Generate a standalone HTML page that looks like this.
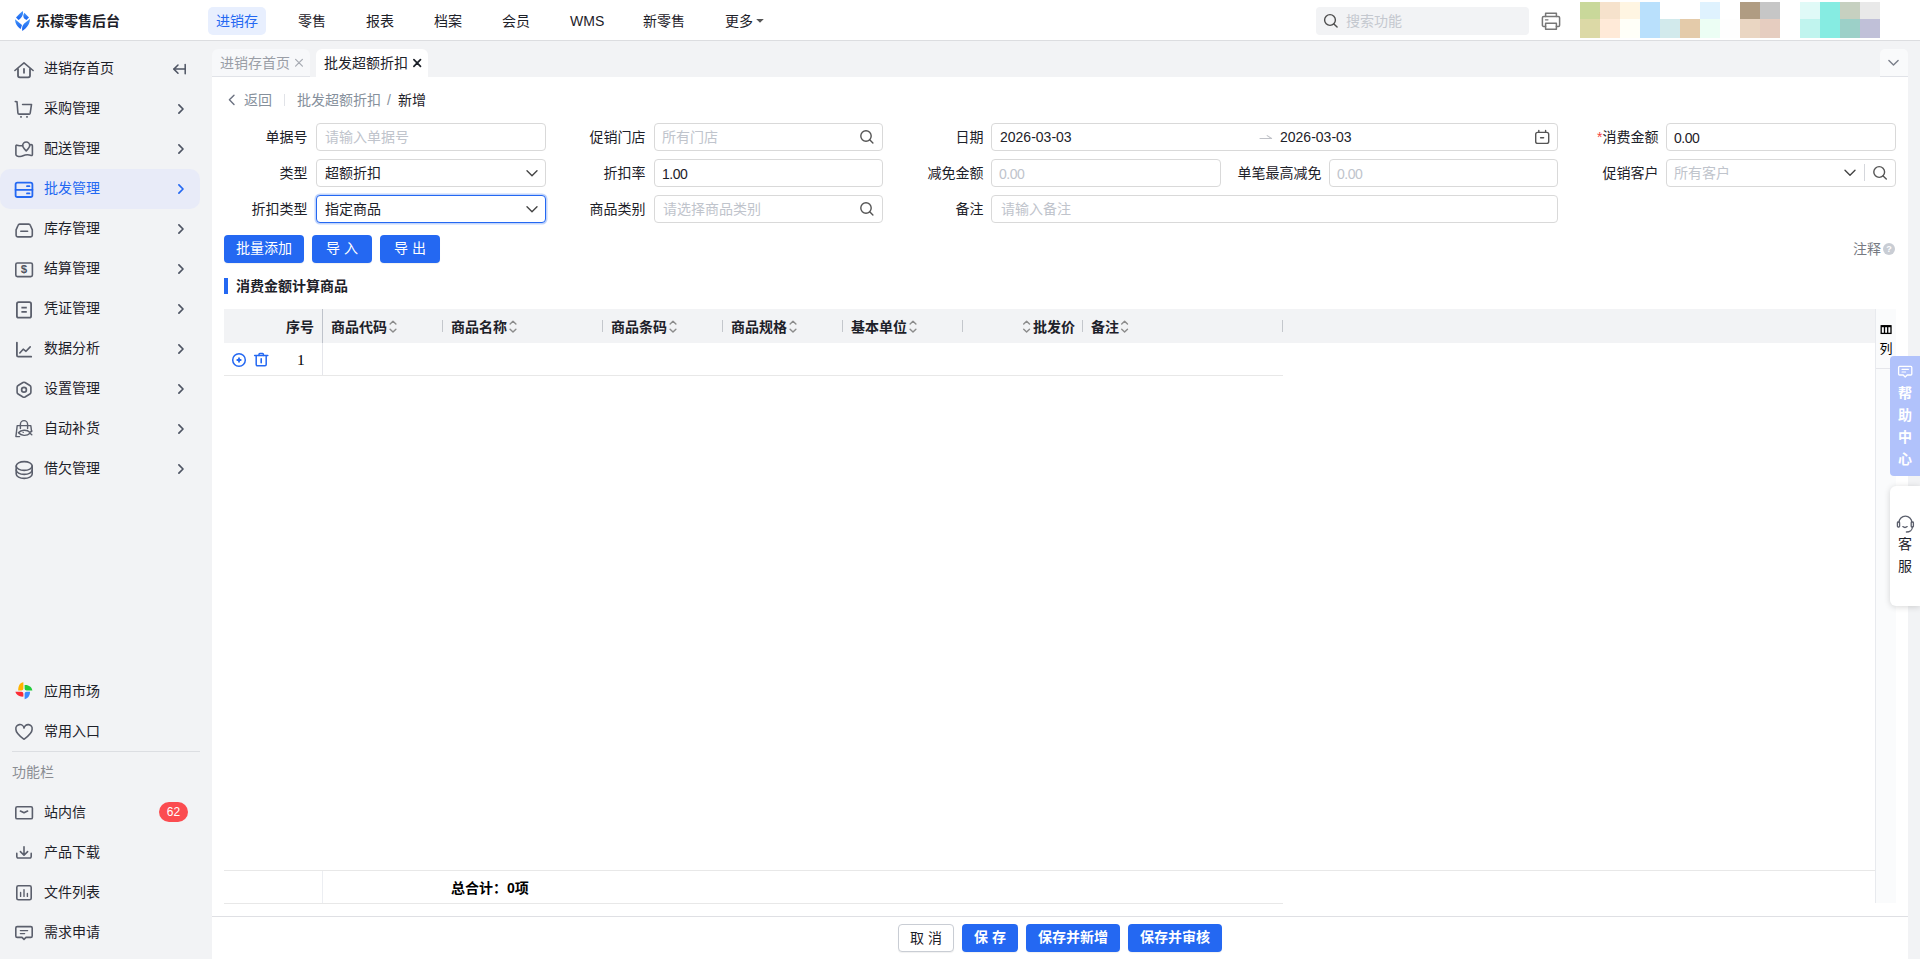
<!DOCTYPE html>
<html lang="zh-CN">
<head>
<meta charset="utf-8">
<title>批发超额折扣 - 新增</title>
<style>
*{box-sizing:border-box;margin:0;padding:0}
html,body{width:1920px;height:959px;overflow:hidden;background:#f2f3f5;
  font-family:"Liberation Sans","Noto Sans CJK SC",sans-serif;font-size:14px;color:#1d2129}
.abs{position:absolute}
#page{position:relative;width:1920px;height:959px;overflow:hidden;background:#f2f3f5}
/* header */
#hdr{position:absolute;left:0;top:0;width:1920px;height:41px;background:#fff;border-bottom:1px solid #dcdde0}
.t{position:absolute;white-space:nowrap;line-height:20px;height:20px;font-size:14px}
.nav{top:11px;color:#1d2129}
#pill{left:208px;top:7px;width:58px;height:28px;border-radius:5px;background:#e8effe}
/* sidebar */
.si{position:absolute;left:44px;font-size:14px;line-height:20px;height:20px;color:#1d2129;white-space:nowrap}
.chev{position:absolute;left:176px;width:10px;height:12px}
.ico{position:absolute;left:13px;width:22px;height:22px}
svg{display:block;overflow:visible}
/* main */
#main{position:absolute;left:212px;top:77px;width:1696px;height:882px;background:#fff}
.lbl{position:absolute;white-space:nowrap;line-height:20px;height:20px;font-size:14px;color:#1d2129;text-align:right}
.inp{position:absolute;height:28px;border:1px solid #d9d9d9;border-radius:4px;background:#fff;font-size:14px;line-height:26px;padding-left:8px;white-space:nowrap;color:#1d2129}
.ph{color:#c0c4cc}
.btn{position:absolute;height:28px;border-radius:4px;background:#2468f2;color:#fff;font-size:14px;line-height:27px;box-shadow:0 1px 1px rgba(0,0,0,.06);text-align:center;white-space:nowrap}
.th{position:absolute;top:317px;font-weight:bold;font-size:14px;line-height:20px;height:20px;white-space:nowrap;color:#1d2129}
.sep{position:absolute;top:320px;width:1px;height:12px;background:#c4c7cc}
</style>
</head>
<body>
<div id="page">

<!-- ===== MAIN WHITE AREA ===== -->
<div id="main"></div>


<!-- ===== TABS ===== -->
<div class="abs" style="left:212px;top:49px;width:98px;height:28px;background:#f7f8fa;border-radius:6px 6px 0 0;border-bottom:1px solid #e1e3e8"></div>
<div class="abs" style="left:316px;top:49px;width:112px;height:28px;background:#fff;border-radius:6px 6px 0 0"></div>
<div class="t" style="left:220px;top:53px;color:#9a9ea6">进销存首页</div>
<div class="t" style="left:324px;top:53px;color:#1d2129">批发超额折扣</div>
<div class="abs" style="left:1880px;top:49px;width:28px;height:28px;background:#f9fafb;border-radius:5px 5px 0 0;border-bottom:1px solid #e1e3e8"></div>

<!-- ===== BREADCRUMB ===== -->
<div class="t" style="left:244px;top:90px;color:#86909c">返回</div>
<div class="abs" style="left:284px;top:94px;width:1px;height:12px;background:#e1e3e8"></div>
<div class="t" style="left:297px;top:90px;color:#86909c">批发超额折扣</div>
<div class="t" style="left:387px;top:90px;color:#86909c">/</div>
<div class="t" style="left:398px;top:90px;color:#1d2129">新增</div>

<!-- ===== FORM ===== -->
<div class="lbl" style="left:224.5px;width:83px;top:127px">单据号</div>
<div class="inp ph" style="left:316px;top:123px;width:230px">请输入单据号</div>
<div class="lbl" style="left:224.5px;width:83px;top:163px">类型</div>
<div class="inp" style="left:316px;top:159px;width:230px">超额折扣</div>
<div class="lbl" style="left:224.5px;width:83px;top:199px">折扣类型</div>
<div class="inp" style="left:316px;top:195px;width:230px;border-color:#2468f2;box-shadow:0 0 0 1.5px rgba(36,104,242,.28)">指定商品</div>

<div class="lbl" style="left:562.5px;width:83px;top:127px">促销门店</div>
<div class="inp ph" style="left:654px;top:123px;width:229px;padding-left:7px">所有门店</div>
<div class="lbl" style="left:562.5px;width:83px;top:163px">折扣率</div>
<div class="inp" style="left:654px;top:159px;width:229px;padding-left:7px;line-height:28px;letter-spacing:-0.5px">1.00</div>
<div class="lbl" style="left:562.5px;width:83px;top:199px">商品类别</div>
<div class="inp ph" style="left:654px;top:195px;width:229px">请选择商品类别</div>

<div class="lbl" style="left:900.5px;width:83px;top:127px">日期</div>
<div class="inp" style="left:991px;top:123px;width:567px"><span>2026-03-03</span><span class="abs" style="left:288px;top:0">2026-03-03</span></div>
<div class="lbl" style="left:900.5px;width:83px;top:163px">减免金额</div>
<div class="inp ph" style="left:991px;top:159px;width:230px;padding-left:7px;line-height:28px;letter-spacing:-0.5px">0.00</div>
<div class="lbl" style="left:1221.5px;width:100px;top:163px">单笔最高减免</div>
<div class="inp ph" style="left:1329px;top:159px;width:229px;padding-left:7px;line-height:28px;letter-spacing:-0.5px">0.00</div>
<div class="lbl" style="left:900.5px;width:83px;top:199px">备注</div>
<div class="inp ph" style="left:991px;top:195px;width:567px;padding-left:9px">请输入备注</div>

<div class="lbl" style="left:1575.5px;width:83px;top:127px"><span style="color:#f53f3f">*</span>消费金额</div>
<div class="inp" style="left:1666px;top:123px;width:230px;padding-left:7px;line-height:28px;letter-spacing:-0.5px">0.00</div>
<div class="lbl" style="left:1575.5px;width:83px;top:163px">促销客户</div>
<div class="inp ph" style="left:1666px;top:159px;width:230px;padding-left:7px">所有客户</div>
<div class="abs" style="left:1864px;top:164px;width:1px;height:17px;background:#d5d7dc"></div>

<!-- ===== ACTION BUTTONS ===== -->
<div class="btn" style="left:224px;top:235px;width:80px">批量添加</div>
<div class="btn" style="left:312px;top:235px;width:60px">导 入</div>
<div class="btn" style="left:380px;top:235px;width:60px">导 出</div>
<div class="t" style="left:1853px;top:239px;color:#767a82">注释</div>
<div class="abs" style="left:1883px;top:243px;width:12px;height:12px;border-radius:6px;background:#c9cdd4;color:#fff;font-size:9px;line-height:12px;text-align:center;font-weight:bold">?</div>

<!-- ===== SECTION TITLE ===== -->
<div class="abs" style="left:224px;top:278px;width:4px;height:16px;background:#2468f2"></div>
<div class="t" style="left:236px;top:276px;font-weight:bold">消费金额计算商品</div>

<!-- ===== TABLE ===== -->
<div class="abs" style="left:224px;top:309px;width:1651px;height:34px;background:#f2f3f5"></div>
<div class="abs" style="left:322px;top:309px;width:1px;height:34px;background:#bfc3cb"></div><div class="abs" style="left:322px;top:343px;width:1px;height:33px;background:#e5e6eb"></div>
<div class="abs" style="left:224px;top:375px;width:1059px;height:1px;background:#e8e8e8"></div>
<div class="th" style="left:286px">序号</div>
<div class="th" style="left:331px">商品代码</div>
<div class="th" style="left:451px">商品名称</div>
<div class="th" style="left:611px">商品条码</div>
<div class="th" style="left:731px">商品规格</div>
<div class="th" style="left:851px">基本单位</div>
<div class="th" style="left:1033px">批发价</div>
<div class="th" style="left:1091px">备注</div>
<div class="sep" style="left:442px"></div>
<div class="sep" style="left:602px"></div>
<div class="sep" style="left:722px"></div>
<div class="sep" style="left:842px"></div>
<div class="sep" style="left:962px"></div>
<div class="sep" style="left:1082px"></div>
<div class="sep" style="left:1282px"></div>
<div class="t" style="left:297px;top:350px;font-family:'Liberation Serif',serif;font-size:15.5px;color:#000">1</div>

<!-- column settings strip -->
<div class="abs" style="left:1875px;top:309px;width:21px;height:594px;background:#fafbfc;border-left:1px solid #e8eaee"></div>
<div class="abs" style="left:1876px;top:368px;width:20px;height:1px;background:#e5e6eb"></div>
<div class="t" style="left:1879.5px;top:339px;font-size:13px;color:#000">列</div>

<!-- ===== TOTAL ROW ===== -->
<div class="abs" style="left:224px;top:870px;width:1651px;height:1px;background:#e8e8e8"></div>
<div class="abs" style="left:224px;top:903px;width:1059px;height:1px;background:#e8e8e8"></div>
<div class="abs" style="left:322px;top:871px;width:1px;height:32px;background:#eceef2"></div>
<div class="t" style="left:451px;top:878px;font-weight:bold;font-size:14px;color:#000">总合计：0项</div>

<!-- ===== BOTTOM BAR ===== -->
<div class="abs" style="left:212px;top:916px;width:1696px;height:1px;background:#dfe0e4"></div>
<div class="btn" style="left:898px;top:924px;width:56px;height:28px;line-height:26px;background:#fff;color:#1d2129;border:1px solid #c9cdd4">取 消</div>
<div class="btn" style="left:962px;top:924px;width:56px;height:28px;line-height:27px;font-weight:bold">保 存</div>
<div class="btn" style="left:1026px;top:924px;width:94px;height:28px;line-height:27px;font-weight:bold">保存并新增</div>
<div class="btn" style="left:1128px;top:924px;width:94px;height:28px;line-height:27px;font-weight:bold">保存并审核</div>

<!-- ===== RIGHT FLOATS ===== -->
<div class="abs" style="left:1890px;top:356px;width:30px;height:120px;background:#b1c2fb;border-radius:4px 0 0 4px"></div>
<div class="abs" style="left:1890px;top:486px;width:30px;height:120px;background:#fff;border-radius:6px 0 0 6px;box-shadow:0 1px 6px rgba(0,0,0,.16)"></div>
<div class="t" style="left:1898px;top:382px;color:#fff;font-size:14px;line-height:22px;height:auto;width:14px;white-space:normal;font-weight:bold">帮助中心</div>
<div class="t" style="left:1898px;top:533px;color:#1d2129;font-size:14px;line-height:22px;height:auto;width:14px;white-space:normal">客服</div>

<!-- ===== HEADER ===== -->
<div id="hdr"></div>
<div class="abs" id="pill"></div>
<div class="t" style="left:36px;top:11px;font-weight:bold;font-size:14px;color:#1d2129;letter-spacing:0">乐檬零售后台</div>
<div class="t nav" style="left:216px;color:#2468f2">进销存</div>
<div class="t nav" style="left:298px">零售</div>
<div class="t nav" style="left:366px">报表</div>
<div class="t nav" style="left:434px">档案</div>
<div class="t nav" style="left:502px">会员</div>
<div class="t nav" style="left:570px">WMS</div>
<div class="t nav" style="left:643px">新零售</div>
<div class="t nav" style="left:725px">更多</div>

<!-- ===== MAIN ICONS (page coordinates) ===== -->
<svg class="abs" style="left:0;top:0" width="1920" height="959" viewBox="0 0 1920 959" fill="none" stroke-linecap="round" stroke-linejoin="round">
  <defs><linearGradient id="lg" x1="0" y1="0" x2="0" y2="1"><stop offset="0" stop-color="#4697fa"/><stop offset="1" stop-color="#1660ef"/></linearGradient></defs>
  <!-- logo -->
  <g fill="url(#lg)" stroke="none">
    <path d="M22.8 10.9 C21.2 12.2 17.4 15.6 16 17.6 L18.5 20 C20.4 18.6 24 15.6 22.8 10.9 z"/>
    <path d="M24.3 12.8 L29 17.4 L26.4 20 C23.4 18.6 22.4 16 24.3 12.8 z"/>
    <path d="M15.1 19.2 L22 25 L20.7 29.1 C17.6 27 15 23.6 15.1 19.2 z"/>
    <path d="M29.9 19 C30.1 23.6 27 27.8 22.3 30.9 C21.6 27.6 22.4 25 24.2 23.4 C26 21.8 28 20.6 29.9 19 z"/>
  </g>
  <!-- header: caret, search, printer, pixel blocks -->
  <path d="M756.2 19 H763.8 L760 22.8 z" fill="#555" stroke="none"/>
  <rect x="1316" y="7" width="213" height="28" rx="4" fill="#f2f3f5"/>
  <g stroke="#4e4e4e" stroke-width="1.4"><circle cx="1330" cy="20" r="5.4"/><path d="M1333.9 23.9 L1337.1 27.1"/></g>
  <g stroke="#777" stroke-width="1.5">
    <path d="M1545.6 16.4 V13.2 H1556.4 V16.4"/>
    <path d="M1545.6 26.4 H1543.6 a1.2 1.2 0 0 1 -1.2 -1.2 V17.8 a1.4 1.4 0 0 1 1.4 -1.4 H1558.2 a1.4 1.4 0 0 1 1.4 1.4 V25.2 a1.2 1.2 0 0 1 -1.2 1.2 H1556.4"/>
    <rect x="1545.6" y="23.2" width="10.8" height="6" />
    <path d="M1545.4 19.8 H1548" stroke-width="1.2"/>
  </g>
  <g stroke="none"><rect x="1580" y="2" width="20" height="17" fill="#c9d89a"/><rect x="1580" y="19" width="20" height="19" fill="#dcd9a6"/><rect x="1600" y="2" width="20" height="17" fill="#f6e2cc"/><rect x="1600" y="19" width="20" height="19" fill="#ffead8"/><rect x="1620" y="2" width="20" height="17" fill="#fff5e2"/><rect x="1620" y="19" width="20" height="19" fill="#fffff8"/><rect x="1640" y="2" width="20" height="17" fill="#b9e0fc"/><rect x="1640" y="19" width="20" height="19" fill="#b9e0fc"/><rect x="1660" y="19" width="20" height="19" fill="#d2eaec"/><rect x="1680" y="19" width="20" height="19" fill="#e4cbaa"/><rect x="1700" y="2" width="20" height="17" fill="#dff2fe"/><rect x="1700" y="19" width="20" height="19" fill="#ecfef4"/><rect x="1720" y="19" width="20" height="19" fill="#fefefe"/><rect x="1740" y="2" width="20" height="17" fill="#b09c82"/><rect x="1740" y="19" width="20" height="19" fill="#ead6c2"/><rect x="1760" y="2" width="20" height="17" fill="#c6c6c6"/><rect x="1760" y="19" width="20" height="19" fill="#e6cdc0"/><rect x="1800" y="2" width="20" height="17" fill="#e0faf7"/><rect x="1800" y="19" width="20" height="19" fill="#c0f4ee"/><rect x="1820" y="2" width="20" height="17" fill="#86ece2"/><rect x="1820" y="19" width="20" height="19" fill="#86ece2"/><rect x="1840" y="2" width="20" height="17" fill="#c6d0c0"/><rect x="1840" y="19" width="20" height="19" fill="#9cd0c8"/><rect x="1860" y="2" width="20" height="17" fill="#e9e9e9"/><rect x="1860" y="19" width="20" height="19" fill="#c0c0d8"/></g>
  <!-- tab close, collapse chevron -->
  <path d="M295.6 59.4 L302.4 66.2 M302.4 59.4 L295.6 66.2" stroke="#a6aab2" stroke-width="1.2"/>
  <path d="M413.9 59.7 L420.5 66.3 M420.5 59.7 L413.9 66.3" stroke="#1d2129" stroke-width="1.7"/>
  <path d="M1888.9 60.5 L1893.5 65.1 L1898.1 60.5" stroke="#7a7f8a" stroke-width="1.4"/>
  <!-- back -->
  <path d="M234 95.2 L229.4 99.8 L234 104.4" stroke="#6b7180" stroke-width="1.4"/>
  <!-- form icons -->
  <path d="M527 170.7 L532 175.7 L537 170.7" stroke="#444" stroke-width="1.4"/>
  <path d="M527 206.7 L532 211.7 L537 206.7" stroke="#444" stroke-width="1.4"/>
  <g stroke="#555" stroke-width="1.4"><circle cx="866" cy="136" r="5.2"/><path d="M869.7 139.7 L872.9 142.9"/></g>
  <g stroke="#555" stroke-width="1.4"><circle cx="866" cy="208" r="5.2"/><path d="M869.7 211.7 L872.9 214.9"/></g>
  <path d="M1260 138.5 H1271.6 L1267.2 135.6" stroke="#c0c2c8" stroke-width="1.1"/>
  <g stroke="#555" stroke-width="1.4">
    <rect x="1535.7" y="132.4" width="13" height="11" rx="2"/>
    <path d="M1538.8 130.4 V132.4 M1545.6 130.4 V132.4"/>
    <path d="M1540.6 137.7 H1543.6"/>
  </g>
  <path d="M1845 170.3 L1850 175.3 L1855 170.3" stroke="#444" stroke-width="1.4"/>
  <g stroke="#555" stroke-width="1.4"><circle cx="1879.2" cy="172" r="5.4"/><path d="M1883.1 175.9 L1886.3 179.1"/></g>
  <!-- table sort icons -->
  <g stroke="#8c8c8c" stroke-width="1.4">
    <path d="M390.1 324.1 L393.0 321.2 L395.9 324.1 M390.1 329.2 L393.0 332.1 L395.9 329.2"/><path d="M510.1 324.1 L513.0 321.2 L515.9 324.1 M510.1 329.2 L513.0 332.1 L515.9 329.2"/><path d="M670.1 324.1 L673.0 321.2 L675.9 324.1 M670.1 329.2 L673.0 332.1 L675.9 329.2"/><path d="M790.1 324.1 L793.0 321.2 L795.9 324.1 M790.1 329.2 L793.0 332.1 L795.9 329.2"/><path d="M910.1 324.1 L913.0 321.2 L915.9 324.1 M910.1 329.2 L913.0 332.1 L915.9 329.2"/><path d="M1023.7 324.1 L1026.6 321.2 L1029.5 324.1 M1023.7 329.2 L1026.6 332.1 L1029.5 329.2"/><path d="M1121.7 324.1 L1124.6 321.2 L1127.5 324.1 M1121.7 329.2 L1124.6 332.1 L1127.5 329.2"/>
  </g>
  <!-- row icons -->
  <g stroke="#2468f2" stroke-width="1.5">
    <circle cx="239" cy="360" r="6.3"/>
    <path d="M236.6 360 H241.4 M239 357.6 V362.4" stroke-width="1.8" stroke-linecap="butt"/>
    <path d="M254.6 355.6 H267.8"/>
    <path d="M259 355.4 V354.4 a0.8 0.8 0 0 1 0.8 -0.8 H262.6 a0.8 0.8 0 0 1 0.8 0.8 V355.4"/>
    <path d="M256.2 355.8 V364.6 a1.2 1.2 0 0 0 1.2 1.2 H265 a1.2 1.2 0 0 0 1.2 -1.2 V355.8"/>
    <path d="M261.2 358.8 V362.8" stroke-width="1.6"/>
  </g>
  <!-- column icon -->
  <g stroke="#000" stroke-width="1.3" stroke-linejoin="miter" stroke-linecap="butt">
    <rect x="1881.2" y="325.8" width="9.8" height="7.6"/>
    <path d="M1884.5 325.8 V333.4 M1887.7 325.8 V333.4"/>
    <path d="M1881.2 326.3 H1891" stroke-width="1.8"/>
  </g>
  <!-- help center bubble -->
  <g stroke="#fff" stroke-width="1.3">
    <path d="M1899.6 366.4 H1910.8 a1 1 0 0 1 1 1 V374 a1 1 0 0 1 -1 1 H1907.2 L1905.2 377 L1903.2 375 H1899.6 a1 1 0 0 1 -1 -1 V367.4 a1 1 0 0 1 1 -1 z"/>
    <path d="M1902 369.4 H1908.4 M1902 372 H1905.6" stroke-width="1.1"/>
  </g>
  <!-- headset -->
  <g stroke="#5b5f6c" stroke-width="1.3">
    <path d="M1899 522.6 a6.4 6.4 0 0 1 12.8 0"/>
    <rect x="1897.4" y="522" width="2.2" height="5" rx="0.8"/>
    <rect x="1911.2" y="522" width="2.2" height="5" rx="0.8"/>
    <path d="M1912.4 527 c0 3 -2.6 5 -6 5"/>
    <path d="M1902.8 526.6 c1.2 1 3.2 1 4.4 0"/>
  </g>
</svg>
<div class="t" style="left:1346px;top:11px;color:#c4c8cf">搜索功能</div>

<!-- ===== SIDEBAR ===== -->
<div class="abs" style="left:0;top:169px;width:200px;height:40px;border-radius:10px;background:#e8ebf8"></div>
<div class="si" style="top:58px">进销存首页</div>
<div class="si" style="top:98px">采购管理</div>
<div class="si" style="top:138px">配送管理</div>
<div class="si" style="top:178px;color:#2468f2">批发管理</div>
<div class="si" style="top:218px">库存管理</div>
<div class="si" style="top:258px">结算管理</div>
<div class="si" style="top:298px">凭证管理</div>
<div class="si" style="top:338px">数据分析</div>
<div class="si" style="top:378px">设置管理</div>
<div class="si" style="top:418px">自动补货</div>
<div class="si" style="top:458px">借欠管理</div>
<div class="si" style="top:681px">应用市场</div>
<div class="si" style="top:721px">常用入口</div>
<div class="abs" style="left:12px;top:751px;width:188px;height:1px;background:#dcdee2"></div>
<div class="si" style="left:12px;top:762px;color:#8a8d93">功能栏</div>
<div class="si" style="top:802px">站内信</div>
<div class="si" style="top:842px">产品下载</div>
<div class="si" style="top:882px">文件列表</div>
<div class="si" style="top:922px">需求申请</div>
<div class="abs" style="left:159px;top:802px;width:29px;height:20px;border-radius:10px;background:#fb4c50;color:#fff;font-size:12px;line-height:21px;text-align:center">62</div>

<!-- ===== SIDEBAR ICONS (page coordinates) ===== -->
<svg class="abs" style="left:0;top:0" width="212" height="959" viewBox="0 0 212 959" fill="none" stroke="#5b5f6c" stroke-width="1.6" stroke-linecap="round" stroke-linejoin="round">
  <!-- home -->
  <path d="M14.9 70.5 L24 62.8 L33.1 70.5"/>
  <path d="M18 69 V75.6 a1.7 1.7 0 0 0 1.7 1.7 H28.3 a1.7 1.7 0 0 0 1.7 -1.7 V69" stroke-width="1.8"/>
  <path d="M24 69 V72.8" stroke-width="1.8"/>
  <!-- collapse arrow -->
  <g stroke="#4e5463" stroke-width="1.5">
    <path d="M185.2 64.4 V73.8"/>
    <path d="M174 69.1 H185"/>
    <path d="M178 65 L173.9 69.1 L178 73.2"/>
  </g>
  <!-- cart -->
  <path d="M15.3 101.5 L17 101.9 L17.9 113 Q18 114.1 19.1 114.1 H29.2 Q30 114.1 30.2 113.2 L31.5 104.5 H22.6"/>
  <path d="M20.2 116.9 H21.8 M26.2 116.9 H27.8" stroke-width="1.7" stroke-linecap="butt"/>
  <!-- map pin -->
  <path d="M22.6 145.4 C21 146.4 19 145.6 17 145.2 Q15.9 145 15.9 146.2 V154.6 Q15.9 155.6 17 155.9 C19 156.6 21 156.8 23 155.8 C26 154.4 28.6 154.6 31.2 155.5 Q32.4 155.8 32.4 154.6 V145.8 Q32.4 144.6 31.2 144.6 L29.8 144.8"/>
  <path d="M26.2 142 a3.5 3.5 0 0 1 3.5 3.5 c0 1.9 -1.5 3.4 -3.5 5.4 c-2 -2 -3.5 -3.5 -3.5 -5.4 a3.5 3.5 0 0 1 3.5 -3.5 z"/>
  <!-- server (active) -->
  <g stroke="#2468f2" stroke-width="1.8">
    <rect x="15.6" y="182.6" width="16.8" height="14.4" rx="1.8"/>
    <path d="M15.6 189.8 H32.4"/>
    <path d="M27 186.2 H29.4 M27 193.4 H29.4"/>
  </g>
  <!-- inventory -->
  <path d="M19.7 224.1 H28.7 Q29.9 224.1 30.3 225.2 L32.3 229.9 V235.3 Q32.3 236.9 30.7 236.9 H17.7 Q16.1 236.9 16.1 235.3 V229.9 L18.1 225.2 Q18.5 224.1 19.7 224.1 z"/>
  <path d="M20.8 231.3 H27.6"/>
  <!-- settlement -->
  <rect x="15.8" y="263" width="16.6" height="13.6" rx="1.6"/>
  <!-- voucher -->
  <rect x="16.9" y="302.1" width="14.2" height="15.6" rx="1.8" stroke-width="1.8"/>
  <path d="M21.4 307.7 H26.8 M21.4 311.9 H26.8" stroke-linecap="butt" stroke-width="1.7"/>
  <!-- chart -->
  <path d="M16.9 342.6 V355.3 a1.4 1.4 0 0 0 1.4 1.4 H31.2" stroke-width="1.8"/>
  <path d="M19.8 353 L23.2 349.2 L26 351.3 L30.2 346.9"/>
  <!-- settings -->
  <path d="M23 382.5 a2 2 0 0 1 2 0 L29.9 385.5 a2 2 0 0 1 1 1.7 V392.3 a2 2 0 0 1 -1 1.7 L25 397 a2 2 0 0 1 -2 0 L18.1 394 a2 2 0 0 1 -1 -1.7 V387.2 a2 2 0 0 1 1 -1.7 z"/>
  <circle cx="24" cy="389.8" r="2.4" stroke-width="1.7"/>
  <!-- auto replenish: bag + eye -->
  <g stroke-width="1.4">
    <path d="M20.4 425.6 V424.2 a3.6 3.6 0 0 1 7.2 0 V428.6"/>
    <path d="M20.4 425.6 V428.6"/>
    <path d="M19.6 436.6 H15.9 L17.2 425.6 H30.8 L31.6 431.6"/>
    <path d="M18.4 432.8 c2.6 -3 8.4 -3.6 11.6 -0.4 l1.8 -1.4 M18.4 432.8 c2.6 3 8.4 3.6 11.6 0.4 l1.8 1.6"/>
    <circle cx="23.2" cy="432.4" r="0.7" fill="#5b5f6c" stroke="none"/>
  </g>
  <!-- coins -->
  <ellipse cx="24.2" cy="466" rx="8" ry="4.4"/>
  <path d="M16.2 466 V474 c0 2.4 3.6 4.4 8 4.4 s8 -2 8 -4.4 V466"/>
  <path d="M16.2 470 c0 2.4 3.6 4.4 8 4.4 s8 -2 8 -4.4"/>
  <!-- chevrons -->
  <g stroke="#4e5463" stroke-width="1.7">
    <path d="M178.9 104.9 L183 109.0 L178.9 113.1"/>
    <path d="M178.9 144.9 L183 149.0 L178.9 153.1"/>
    <path d="M178.9 184.9 L183 189.0 L178.9 193.1" stroke="#2468f2"/>
    <path d="M178.9 224.9 L183 229.0 L178.9 233.1"/>
    <path d="M178.9 264.9 L183 269.0 L178.9 273.1"/>
    <path d="M178.9 304.9 L183 309.0 L178.9 313.1"/>
    <path d="M178.9 344.9 L183 349.0 L178.9 353.1"/>
    <path d="M178.9 384.9 L183 389.0 L178.9 393.1"/>
    <path d="M178.9 424.9 L183 429.0 L178.9 433.1"/>
    <path d="M178.9 464.9 L183 469.0 L178.9 473.1"/>
  </g>
  <!-- pinwheel -->
  <g stroke="none">
    <path d="M23.4 682.2 C20 682.6 18 686 18.2 690.5 H21.4 Q23.4 690.5 23.4 688.5 z" fill="#ffb300"/>
    <path d="M24.6 685 C28.6 684.6 31.8 687 32.4 690.5 H26.6 Q24.6 690.5 24.6 688.5 z" fill="#22cc3a"/>
    <path d="M30 691.8 C30 695.6 28 698.6 24.6 699.2 V693.8 Q24.6 691.8 26.6 691.8 z" fill="#3b8cfe"/>
    <path d="M15.4 691.8 C16.2 695 19.6 697 23.4 696.6 V693.8 Q23.4 691.8 21.4 691.8 z" fill="#fb2c36"/>
  </g>
  <!-- heart -->
  <path d="M24 739.2 C20 736.2 15.9 733.2 15.9 729.4 a4.1 4.1 0 0 1 8.1 -1.4 a4.1 4.1 0 0 1 8.1 1.4 c0 3.8 -4.1 6.8 -8.1 9.8 z"/>
  <!-- mail -->
  <rect x="15.8" y="806.8" width="16.6" height="12" rx="1.4"/>
  <path d="M20.4 811 L24 812.8 L27.6 811"/>
  <!-- download -->
  <path d="M24 846.8 V855 M20.4 851.6 L24 855.2 L27.6 851.6"/>
  <path d="M16.8 853.4 V856.6 a1.4 1.4 0 0 0 1.4 1.4 H29.8 a1.4 1.4 0 0 0 1.4 -1.4 V853.4"/>
  <!-- file list -->
  <rect x="16.8" y="885.8" width="14.4" height="14" rx="1.6"/>
  <path d="M20.6 892.4 V896.4 M24 889.6 V896.4 M27.4 893.4 V896.4" stroke-width="1.4"/>
  <!-- request -->
  <path d="M17.2 926.6 H30.8 a1.4 1.4 0 0 1 1.4 1.4 V936 a1.4 1.4 0 0 1 -1.4 1.4 H26 L24 939.4 L22 937.4 H17.2 a1.4 1.4 0 0 1 -1.4 -1.4 V928 a1.4 1.4 0 0 1 1.4 -1.4 z"/>
  <path d="M20.4 930.6 H27.6 M20.4 933.6 H24.6" stroke-width="1.4"/>
</svg>
<div class="abs" style="left:14px;top:259px;width:20px;height:20px;line-height:20px;text-align:center;font-size:11.5px;font-weight:bold;color:#50545f;font-family:'Liberation Sans',sans-serif">$</div>

</div>
</body>
</html>
